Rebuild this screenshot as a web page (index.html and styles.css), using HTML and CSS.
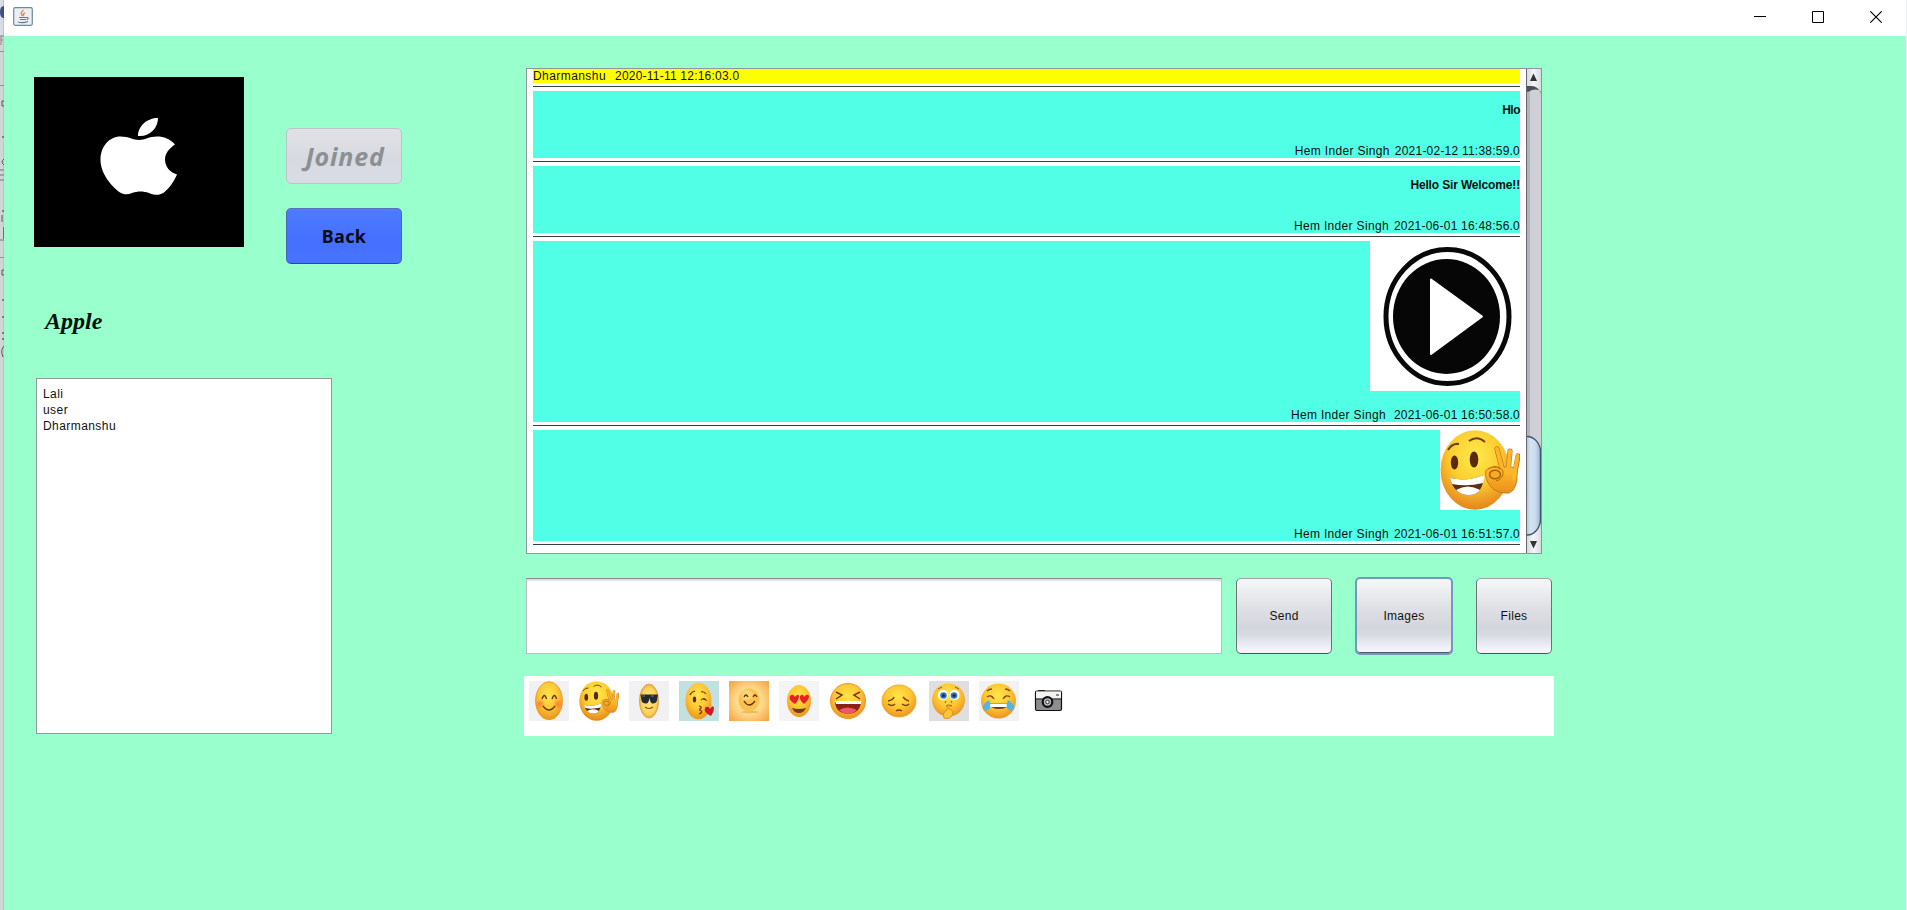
FILE: index.html
```html
<!DOCTYPE html>
<html lang="en">
<head>
<meta charset="utf-8">
<title>Apple</title>
<link rel="stylesheet" href="styles.css">
</head>
<body>
<svg class="defs" width="0" height="0" aria-hidden="true">
  <defs>
    <radialGradient id="gold" cx=".48" cy=".35" r=".7"><stop offset="0" stop-color="#ffe548"/><stop offset=".5" stop-color="#fdc734"/><stop offset="1" stop-color="#e88b1c"/></radialGradient>
    <radialGradient id="sunny" cx=".5" cy=".32" r=".72"><stop offset="0" stop-color="#ffea4a"/><stop offset=".5" stop-color="#fccd30"/><stop offset="1" stop-color="#e27a1c"/></radialGradient>
    <radialGradient id="pale" cx=".5" cy=".5" r=".55"><stop offset="0" stop-color="#ffe680"/><stop offset=".7" stop-color="#fcd35c"/><stop offset="1" stop-color="#e39a35"/></radialGradient>
    <radialGradient id="glow" cx=".5" cy=".5" r=".65"><stop offset="0" stop-color="#fff3a8"/><stop offset=".55" stop-color="#fdd685"/><stop offset="1" stop-color="#f5a84a"/></radialGradient>
    <linearGradient id="hand" x1="0" y1="0" x2="0" y2="1"><stop offset="0" stop-color="#ffc02b"/><stop offset="1" stop-color="#ea8f1c"/></linearGradient>
    <radialGradient id="blush"><stop offset="0" stop-color="#ff6b35" stop-opacity=".8"/><stop offset="1" stop-color="#ff6b35" stop-opacity="0"/></radialGradient>
    <linearGradient id="thumb"><stop offset="0" stop-color="#a9bdd2"/><stop offset=".3" stop-color="#d5e4f2"/><stop offset=".65" stop-color="#c9dcee"/><stop offset="1" stop-color="#9ab4cc"/></linearGradient>
    <linearGradient id="arrowcap"><stop offset="0" stop-color="#d4d5dc"/><stop offset=".5" stop-color="#f4f5f8"/><stop offset="1" stop-color="#d9dbe2"/></linearGradient>
    <symbol id="ok" viewBox="0 0 80 80">
      <ellipse cx="35" cy="40" rx="34.500" ry="39.700" fill="url(#sunny)"/>
      <ellipse cx="14.500" cy="32.500" rx="3.700" ry="7" fill="#5a2a0c"/><ellipse cx="34" cy="29.500" rx="4.300" ry="8" fill="#5a2a0c"/>
      <path d="M8 20q4-7 11-6M29 11q8-6 16 1" fill="none" stroke="#6d4513" stroke-width="2"/>
      <path d="M10 48q17 4 34-3-1 20-15 20-15 0-19-17z" fill="#5c2f12"/>
      <path d="M10 48q17 4 34-3 1 3-1 8-16 4-31 1z" fill="#fff"/>
      <path d="M16 60q12-7 24 0-4 5-11 5-8 0-13-5z" fill="#fff"/>
      <path d="M57 19l6 23M70 21l-2 22M78 26l-4 22" fill="none" stroke="#bd7412" stroke-width="5.200" stroke-linecap="round"/>
      <path d="M46 40q8-5 14-1l8-3 9 3v11q-2 11-8 13-11 1-18-6-7-8-5-17z" fill="url(#hand)" stroke="#bd7412" stroke-width=".8"/>
      <path d="M57 19l6 23M70 21l-2 22M77.500 26l-3.500 22" fill="none" stroke="#fdb52b" stroke-width="4" stroke-linecap="round"/>
      <ellipse cx="55" cy="44.500" rx="5.500" ry="4.300" fill="#f8a926" stroke="#a9640b" stroke-width="1.500"/>
      <path d="M48 39q9-6 15 2 1 8-7 10" fill="none" stroke="#b76c0c" stroke-width="1"/>
    </symbol>
  </defs>
</svg>

<div class="backdrop left">
  <svg width="4" height="910" viewBox="0 0 4 910">
    <rect width="4" height="36" fill="#d7dce8"/><rect x="3" width="1" height="910" fill="#c2c2c3"/>
    <path d="M4 6Q0 6 0 12T4 18z" fill="#3c4e83"/>
    <path d="M1 35v10M1 36h3M1 40h2" stroke="#93807f" fill="none"/>
    <path d="M0 51.500h4M0 85.500h4M0 257.500h4" stroke="#929292"/>
    <path d="M4 101H2v5h2M4 270H2v5h2M4 159q-4 3 0 6M2 215v7M4 346q-4 4-1 11" fill="none" stroke="#555"/>
    <path d="M0 170h4M0 175h4M0 180h4M0 240h4" stroke="#64748d"/><path d="M3.500 227v12" stroke="#64748d"/>
    <path d="M2 137h2M2 211h2M2 300h2M2 317h2M2 333h2M2 339h2" stroke="#333"/>
  </svg>
</div>
<div class="window">
  <header class="titlebar">
    <svg class="java" width="20" height="19" viewBox="0 0 20 19">
      <rect x=".7" y=".7" width="18.600" height="17.600" rx="1.500" fill="#e9eff5" stroke="#728898" stroke-width="1.200"/>
      <path d="M10.500 3q-4 3-1 6M12 6q-3 1-1 3" fill="none" stroke="#e58a4a" stroke-width="1.400"/>
      <path d="M6 10.500h8M7 12.500h6M5 15q5 1.500 10-.5M14 10.500q2 0 0 2.500" fill="none" stroke="#5b7d9b" stroke-width="1.200"/>
    </svg>
    <div class="controls">
      <svg width="12" height="12" viewBox="0 0 12 12"><path d="M0 5.500h12" stroke="#000"/></svg>
      <svg width="12" height="12" viewBox="0 0 12 12"><path d="M.5.500h11v11H.5z" fill="none" stroke="#000"/></svg>
      <svg width="12" height="12" viewBox="0 0 12 12"><path d="M.3.300l11.400 11.400M11.700.300L.3 11.700" stroke="#000" stroke-width="1.100"/></svg>
    </div>
  </header>

  <main class="content">
    <section class="side">
      <div class="profile">
        <svg class="logo" width="210" height="170" viewBox="0 0 210 170">
          <rect width="210" height="170"/>
          <path fill="#fff" d="M104 59c0-10 9-18 20-18 0 10-8 19-20 18zM105 63c6 0 10-3.500 18-3.500 7 0 13 2.500 18 8-6 4-10 9-10 15 0 7 5 13 12 15-3 7-8 14-13 18-6 4-11 2-15 .5-6-2-11-2-17 0-4 1.500-8 2-12-.5C77 109 66.500 96 66.500 83c0-14 9-23.500 20-23.500 8 0 13 3.500 18.500 3.500z"/>
        </svg>
        <div class="actions">
          <button class="btn joined" disabled>Joined</button>
          <button class="btn back">Back</button>
        </div>
      </div>
      <h1 class="group-name">Apple</h1>
      <ul class="members"><li>Lali</li><li>user</li><li>Dharmanshu</li></ul>
    </section>

    <section class="chat">
      <div class="pane">
        <div class="messages">
          <article class="msg other"><footer><span class="name">Dharmanshu</span><time>2020-11-11 12:16:03.0</time></footer></article>
          <hr>
          <article class="msg text"><p>Hlo</p><footer><span class="name">Hem Inder Singh</span><time>2021-02-12 11:38:59.0</time></footer></article>
          <hr>
          <article class="msg text"><p class="long">Hello Sir Welcome!!</p><footer><span class="name">Hem Inder Singh</span><time>2021-06-01 16:48:56.0</time></footer></article>
          <hr>
          <article class="msg picture">
            <svg width="150" height="150" viewBox="0 0 150 150"><rect width="150" height="150" fill="#fff"/><ellipse cx="77.500" cy="75.500" rx="61.500" ry="67" fill="none" stroke="#080808" stroke-width="5"/><ellipse cx="76.500" cy="75.500" rx="53.500" ry="57.500" fill="#060606"/><path d="M61 38.500l51 37-51 37.500z" fill="#fff" stroke="#fff" stroke-linejoin="round" stroke-width="2"/></svg>
            <footer class="wide"><span class="name">Hem Inder Singh</span><time>2021-06-01 16:50:58.0</time></footer>
          </article>
          <hr>
          <article class="msg sticker">
            <svg width="80" height="80"><rect width="80" height="80" fill="#fff"/><use href="#ok"/></svg>
            <footer><span class="name">Hem Inder Singh</span><time>2021-06-01 16:51:57.0</time></footer>
          </article>
          <hr>
        </div>
        <svg class="scrollbar" width="16" height="484" viewBox="0 0 16 484">
          <rect x="0" y="0" width="16" height="484" fill="#cfcfd6"/>
          <path d="M2.500 0v484" stroke="#b3b3bd" stroke-width="3"/>
          <path d="M0 17h7q5 0 8 8v-9H0z" fill="#85858d"/>
          <path d="M0 0h15v23q-4-6-9-6H0z" fill="url(#arrowcap)"/>
          <path d="M0 17h5q5 0 8 4-4-1-7 0-3 2-6 2z" fill="#4e4e56"/>
          <path d="M4 12l3.500-7.500L11 12z" fill="#333"/>
          <path d="M0 459h3q8 0 12-8v33H0z" fill="url(#arrowcap)"/>
          <path d="M0 367.500h1c8 0 13.500 8 13.500 15v68c0 8-6 15.500-13.500 15.500H0z" fill="url(#thumb)" stroke="#3e546b" stroke-width="1.300"/>
          <path d="M4 472h7l-3.500 7.500z" fill="#333"/>
          <path d="M.5 0v484" stroke="#686870"/><path d="M15.500 0v484" stroke="#8f9198"/>
        </svg>
      </div>

      <div class="composer">
        <input class="entry" type="text" aria-label="Message">
        <button class="btn send">Send</button>
        <button class="btn images">Images</button>
        <button class="btn files">Files</button>
      </div>

      <div class="emojis">
        <svg viewBox="0 0 40 40"><rect width="40" height="40" fill="#f1f1f3"/><ellipse cx="20" cy="19.700" rx="13.500" ry="19" fill="url(#gold)" stroke="#e9a12b"/><ellipse cx="11" cy="23" rx="5" ry="5" fill="url(#blush)"/><ellipse cx="29" cy="23" rx="5" ry="5" fill="url(#blush)"/><path d="M13 18q2.500-7 4.500 0M23 18q2.500-7 4.500 0M14 25q6 8 12 0" fill="none" stroke="#693512" stroke-width="1.400"/></svg>
        <svg viewBox="0 0 80 80"><use href="#ok"/></svg>
        <svg viewBox="0 0 40 40"><rect width="40" height="40" fill="#f1f1f3"/><ellipse cx="20" cy="20" rx="9.500" ry="17" fill="url(#pale)" stroke="#dfa654"/><path d="M11.500 13.500H29l-1 6q-1 3-4 3-3 0-3.500-6-.5 6-3.500 6-4 0-4.500-3z" fill="#252a30"/><path d="M13 15h3M22 15h3" stroke="#667c8a"/><path d="M16 26q4 3 8 0" fill="none" stroke="#8a5a20" stroke-width="1.200"/></svg>
        <svg viewBox="0 0 40 40"><rect width="40" height="40" fill="#c2e0df"/><ellipse cx="19.500" cy="20" rx="13" ry="18.300" fill="url(#gold)"/><ellipse cx="15.500" cy="18.500" rx="1.700" ry="3" fill="#583010"/><path d="M11 14q1-3 5-4M22 11q3-1 5 2M22 19q3-3 5 0l-3-1M20 25q4 1 1 3-1 1 0 1 4 2-1 4" fill="none" stroke="#683812" stroke-width="1.200"/><path d="M32 35q-8-4-6-8 3-3 5 1 3-5 4-1 0 4-3 8z" fill="#d11624"/></svg>
        <svg viewBox="0 0 40 40"><rect width="40" height="40" fill="url(#glow)"/><ellipse cx="21" cy="31" rx="9" ry="1.200" fill="#cd9b4e" opacity=".55"/><ellipse cx="20" cy="19" rx="10.500" ry="11.500" fill="#fdc04f"/><ellipse cx="18" cy="14" rx="6" ry="5" fill="#ffe18a" opacity=".6"/><path d="M15 16q2-4 4 0M24 16q2-4 4 0M15 20q5 8 11 0" fill="none" stroke="#593514" stroke-width="1.300"/></svg>
        <svg viewBox="0 0 40 40"><rect width="40" height="40" fill="#f4f4f6"/><ellipse cx="20" cy="20" rx="12" ry="16" fill="url(#gold)"/><path d="M16 23q-7-4-5-8 3-3 5 1 3-4 4-1 0 4-4 8z" fill="#e91e27"/><path d="M25 23q-5-4-4-8 3-3 4 1 3-4 5-1 0 4-5 8z" fill="#e91e27"/><path d="M13 27q7 2 14 0-2 5-7 5t-7-5z" fill="#713b16"/></svg>
        <svg viewBox="0 0 40 40"><circle cx="19" cy="20" r="17.500" fill="url(#gold)" stroke="#eb9721"/><path d="M7 11l6 3-6 4M31 11l-6 3 6 4" fill="none" stroke="#6d3b12" stroke-width="1.500"/><path d="M6 20h26q0 12-13 13Q6 32 6 20z" fill="#872317"/><path d="M6 20h26v3H7z" fill="#fff"/><path d="M10 29q8-5 18 0-4 4-9 4t-9-4z" fill="#ee5965"/></svg>
        <svg viewBox="0 0 40 40"><ellipse cx="20" cy="20" rx="17" ry="16" fill="url(#gold)" stroke="#efae2c"/><path d="M9 20q5-1 6-4M24 16q2 3 6 4M9 23q4 3 7 0M23 23q4 3 7 0M17 30q3-2 6 0" fill="none" stroke="#79421a" stroke-width="1.500"/></svg>
        <svg viewBox="0 0 40 40"><rect width="40" height="40" fill="#dfdfe1"/><circle cx="19.500" cy="19" r="16.500" fill="url(#gold)"/><circle cx="14" cy="14" r="5" fill="#fff"/><circle cx="25.500" cy="14" r="5" fill="#fff"/><circle cx="14.500" cy="14.500" r="3.300" fill="#2d79bd"/><circle cx="25" cy="14.500" r="3.300" fill="#2d79bd"/><circle cx="14.500" cy="14.500" r="1.500" fill="#102b52"/><circle cx="25" cy="14.500" r="1.500" fill="#102b52"/><path d="M9 8l4-2M26 6l4 2M16 22l1-2M22 20l1 2M17 25q3-2 6 0" fill="none" stroke="#91551b"/><path d="M19 23q2 1 1 5 5 1 3 7-3 4-8 2-2-5 3-8z" fill="#ffc43a" stroke="#df8e1b"/></svg>
        <svg viewBox="0 0 40 40"><rect width="40" height="40" fill="#f2f2f3"/><circle cx="19.500" cy="20" r="17.500" fill="url(#gold)"/><path d="M8 16q4-3 7 2M24 18q3-5 7-2M8 10q2-2 5-2M26 8q3 0 5 2" fill="none" stroke="#85501c" stroke-width="1.400"/><path d="M9 22h22q-3 6-11 6T9 22z" fill="#713c19"/><path d="M10 22.500h20v3.500H11z" fill="#fff"/><path d="M10 19q-7 4-6 9 3 4 7-1 1-3-1-8zM29 19q7 4 6 9-3 4-7-1-1-3 1-8z" fill="#55b3e5"/></svg>
        <svg viewBox="0 0 40 40"><path d="M9.500 11V9.500h6V11" fill="#e9b63d" stroke="#382a14"/><rect x="6.500" y="10" width="26" height="19.500" rx="1.500" fill="#8c8d91" stroke="#111" stroke-width="1.200"/><path d="M7 10.500h25v7H7z" fill="#f2f2f2"/><path d="M7 18h25M27 14h3" stroke="#222"/><circle cx="18.500" cy="21" r="4.800" fill="#bbb" stroke="#111" stroke-width="2.200"/><circle cx="18.500" cy="21" r="1.800" fill="#eee" stroke="#333"/></svg>
      </div>
    </section>
  </main>
</div>
<div class="backdrop right"></div>
</body>
</html>
```
FILE: styles.css
```css
* { box-sizing: border-box; margin: 0; padding: 0; }
body { display: flex; width: 1907px; height: 910px; overflow: hidden; font: 12px/16px "Liberation Sans", Arial, sans-serif; color: #111; }
svg { display: block; flex: none; }
.defs { position: absolute; }
.backdrop { flex: none; background: #d4d4d5; }
.backdrop.left { width: 4px; }
.backdrop.right { width: 1px; background: #eef0f2; }
.window { flex: 1; background: #9fc; }
.titlebar { height: 36px; background: #fff; display: flex; justify-content: space-between; padding: 7px 24px 0 9px; }
.controls { display: flex; gap: 46px; padding-top: 4px; }
.controls svg:first-child { margin-right: 0; }
.content { display: flex; }
.side { width: 490px; padding: 41px 0 0 30px; }
.profile { display: flex; gap: 42px; height: 187px; }
.actions { display: flex; flex-direction: column; gap: 24px; padding-top: 51px; }
.btn { font: inherit; letter-spacing: .3px; color: #111; border: 1px solid #6c6f75; border-top-color: #a0a2a7; border-bottom-color: #4d5055; border-radius: 5px; background: linear-gradient(#f6f7f9, #dfe0e5 40%, #d4d6de 65%, #d8dae2 75%, #f2f3fa 94%, #f5f6fc); }
.actions .btn { width: 116px; height: 56px; flex: none; font-family: "Noto Sans", "Open Sans", sans-serif; font-weight: 700; }
.actions .joined { font-size: 25px; font-style: italic; line-height: 24px; letter-spacing: .8px; padding-left: 2px; color: #8c8f93; border-color: #bec3c9; background: linear-gradient(#e0e2e7, #d8dae1 55%, #d9dce5); }
.actions .back { font-size: 18px; line-height: 20px; letter-spacing: .3px; color: #080a12; border-color: #5a70c0 #4d63b3 #35488e; background: linear-gradient(#4e7bff, #456fff 60%, #4774ff); }
.group-name { font: italic bold 24px/30px "Liberation Serif", "Times New Roman", serif; margin: 42px 0 0 11px; color: #050f08; }
.members { list-style: none; width: 296px; height: 356px; margin: 42px 0 0 2px; border: 1px solid #91999a; background: #fff; padding: 7px 6px; letter-spacing: .43px; }
.chat { padding: 32px 0 0 30px; }
.pane { display: flex; width: 1016px; height: 486px; margin-left: 2px; border: 1px solid #8e989c; border-right: 0; background: #fff; }
.messages { width: 987px; margin: 0 6px; display: flex; flex-direction: column; }
.messages hr { border: 0; height: 1px; margin: 3px 0 4px; background: #333d42; flex: none; }
.msg { background: #50ffe6; display: flex; flex-direction: column; justify-content: space-between; align-items: flex-end; flex: none; }
.msg.other { background: #ff0; height: 14px; align-items: flex-start; }
.msg.text { height: 67px; }
.msg.picture { height: 181px; }
.msg.sticker { height: 111px; }
.msg p { font-weight: 700; letter-spacing: -.5px; line-height: 15px; padding-top: 12px; }
.msg p.long { letter-spacing: -.15px; }
.msg footer { display: flex; gap: 5px; line-height: 14px; }
.msg.other footer { line-height: 14px; gap: 9px; }
.msg footer.wide { gap: 8px; }
.name { letter-spacing: .33px; }
.other .name { letter-spacing: .43px; }
time { letter-spacing: .22px; }
.composer { display: flex; align-items: center; margin: 23px 0 0 2px; height: 78px; }
.entry { width: 696px; height: 76px; border: 1px solid #b9bec2; border-top-color: #858b8e; background: #fff; box-shadow: inset 0 2px 1px #dedfe2; }
.send { width: 96px; height: 76px; margin-left: 14px; }
.btn.images { width: 98px; height: 78px; margin: 0 23px; border: 2px solid #7298bd; box-shadow: inset 0 -1px #4d5968; }
.files { width: 76px; height: 76px; }
.emojis { display: flex; gap: 10px; width: 1030px; height: 60px; margin-top: 21px; padding: 5px; background: #fff; }
.emojis svg { width: 40px; height: 40px; }
```
